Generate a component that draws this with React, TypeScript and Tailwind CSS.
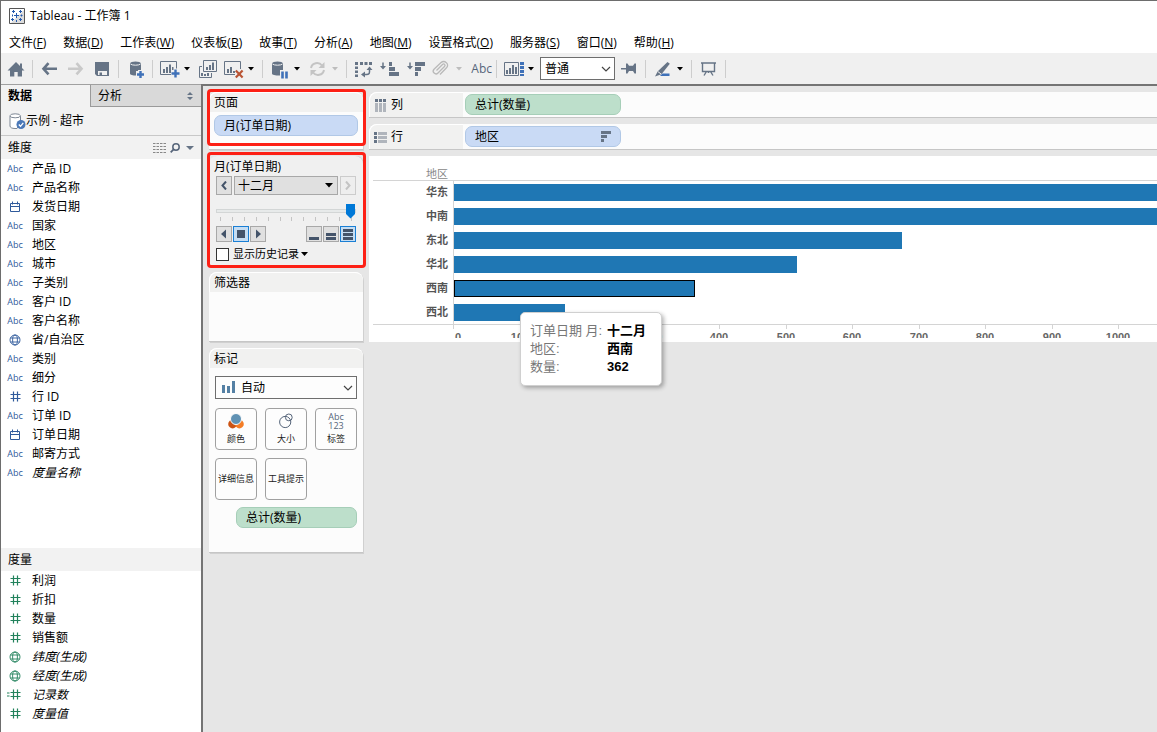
import { useState } from "react";
import type { ReactNode } from "react";

type FieldKind = "abc" | "date" | "geo" | "num" | "calc";

interface Field {
  name: string;
  kind: FieldKind;
  generated?: boolean;
}

const MENUS = [
  ["文件", "F"],
  ["数据", "D"],
  ["工作表", "W"],
  ["仪表板", "B"],
  ["故事", "T"],
  ["分析", "A"],
  ["地图", "M"],
  ["设置格式", "O"],
  ["服务器", "S"],
  ["窗口", "N"],
  ["帮助", "H"],
];

const DIMENSIONS: Field[] = [
  { name: "产品 ID", kind: "abc" },
  { name: "产品名称", kind: "abc" },
  { name: "发货日期", kind: "date" },
  { name: "国家", kind: "abc" },
  { name: "地区", kind: "abc" },
  { name: "城市", kind: "abc" },
  { name: "子类别", kind: "abc" },
  { name: "客户 ID", kind: "abc" },
  { name: "客户名称", kind: "abc" },
  { name: "省/自治区", kind: "geo" },
  { name: "类别", kind: "abc" },
  { name: "细分", kind: "abc" },
  { name: "行 ID", kind: "num" },
  { name: "订单 ID", kind: "abc" },
  { name: "订单日期", kind: "date" },
  { name: "邮寄方式", kind: "abc" },
  { name: "度量名称", kind: "abc", generated: true },
];

const MEASURES: Field[] = [
  { name: "利润", kind: "num" },
  { name: "折扣", kind: "num" },
  { name: "数量", kind: "num" },
  { name: "销售额", kind: "num" },
  { name: "纬度(生成)", kind: "geo", generated: true },
  { name: "经度(生成)", kind: "geo", generated: true },
  { name: "记录数", kind: "calc", generated: true },
  { name: "度量值", kind: "num", generated: true },
];

const REGIONS = [
  { name: "华东", value: 2180 },
  { name: "中南", value: 1960 },
  { name: "东北", value: 673 },
  { name: "华北", value: 516 },
  { name: "西南", value: 362 },
  { name: "西北", value: 167 },
];

const TICKS = [0, 100, 200, 300, 400, 500, 600, 700, 800, 900, 1000];
const PX_PER_UNIT = 0.665;

/* ---------- small shared pieces ---------- */

function Caret({ className = "text-black" }: { className?: string }) {
  return (
    <svg width="6" height="4" viewBox="0 0 6 4" className={`shrink-0 ${className}`}>
      <path d="M0 0H6L3 3.5Z" fill="currentColor" />
    </svg>
  );
}

function Chevron() {
  return (
    <svg width="10" height="6" viewBox="0 0 10 6" className="pointer-events-none absolute right-1 top-1/2 -translate-y-1/2">
      <path d="M1 1L5 5L9 1" fill="none" stroke="#444" strokeWidth="1.2" />
    </svg>
  );
}

function Sep({ className = "w-2" }: { className?: string }) {
  return (
    <span className={`flex justify-center shrink-0 ${className}`}>
      <span className="w-px h-[18px] bg-[#cdcdcd]" />
    </span>
  );
}

function Tool({ label, className = "w-7", children }: { label: string; className?: string; children: ReactNode }) {
  return (
    <button aria-label={label} className={`h-6 flex items-center justify-center shrink-0 text-[#667486] ${className}`}>
      <svg width="20" height="20" viewBox="0 0 20 20" fill="none" className="overflow-visible shrink-0">
        {children}
      </svg>
    </button>
  );
}

function CaretButton({ label, className }: { label: string; className?: string }) {
  return (
    <button aria-label={label} className="w-1.5 h-6 flex items-center shrink-0">
      <Caret className={className} />
    </button>
  );
}

function Toolbar() {
  return (
    <div className="h-[31px] bg-[#f0f0f0] flex items-center pl-[3px] overflow-hidden">
      <Tool label="主页" className="w-6">
        <path d="M10 3L1.5 11.5H4V17.5H8.3V13H11.7V17.5H16V11.5H18.5L16 9V4.5H14V7Z" fill="currentColor" />
      </Tool>
      <Sep />
      <Tool label="撤消" className="w-[26px]">
        <path d="M9.5 4.2L4.5 9.8L9.5 15.4M4.5 9.8H18" stroke="currentColor" strokeWidth="2.6" />
      </Tool>
      <Tool label="重做">
        <path d="M10.5 4.2L15.5 9.8L10.5 15.4M15.5 9.8H2" stroke="#c9c9c9" strokeWidth="2.6" />
      </Tool>
      <Tool label="保存" className="w-6">
        <path d="M3 3H17V17H5L3 15Z" fill="currentColor" />
        <path d="M6 12H15V16H10V13.5H7.5V16H6Z" fill="#f0f0f0" />
      </Tool>
      <Sep />
      <Tool label="新建数据源" className="w-[26px]">
        <path d="M5 4.5C5 1.8 16 1.8 16 4.5V11H13V12H11V16.5C8 16.5 5 16 5 14.5Z" fill="currentColor" />
        <path d="M5.5 5C7 6.6 14 6.6 15.5 5" stroke="#f0f0f0" />
        <path d="M15.5 12V19M12 15.5H19" stroke="#3f71b8" strokeWidth="2.4" />
      </Tool>
      <Sep />
      <Tool label="新建工作表">
        <path d="M11 15.5H.5V2.5H16.5V9.5" stroke="currentColor" />
        <path d="M3 10H5V14H3ZM6 8H8V14H6ZM9 5.5H11V14H9ZM12 8H13.5V11H12Z" fill="currentColor" />
        <path d="M15.5 10.5V18.5M11.5 14.5H19.5" stroke="#3f71b8" strokeWidth="2.4" />
      </Tool>
      <CaretButton label="新建选项" />
      <Tool label="复制工作表" className="w-8">
        <path d="M7.5 1.5H20.5V12.5H7.5Z" stroke="currentColor" />
        <path d="M10 8H12V11H10ZM13 6H15V11H13ZM16 3.5H18V11H16Z" fill="currentColor" />
        <path d="M6 7.5H3.5V18.5H15.5V14" stroke="currentColor" />
        <path d="M5 14H7V17H5ZM8 15H10V17H8ZM11 14H13V17H11Z" fill="currentColor" />
      </Tool>
      <Tool label="清除工作表" className="w-[26px]">
        <path d="M10 15.5H-.5V2.5H15.5V10" stroke="currentColor" />
        <path d="M2 10H4V14H2ZM5 8H7V14H5ZM8 12H10V14H8Z" fill="currentColor" />
        <path d="M10.8 11.5L17.6 18.5M17.6 11.5L10.8 18.5" stroke="#b95434" strokeWidth="2.2" />
      </Tool>
      <CaretButton label="清除选项" />
      <Sep className="w-4" />
      <Tool label="暂停自动更新" className="w-6">
        <path d="M0 4.5C0 1.8 11 1.8 11 4.5V11H8V16.5C3 16.5 0 16 0 14.5Z" fill="currentColor" />
        <path d="M.5 5C2 6.6 9 6.6 10.5 5" stroke="#f0f0f0" />
        <path d="M10.5 12.5V19.5M14.5 12.5V19.5" stroke="#3f71b8" strokeWidth="2.6" />
      </Tool>
      <CaretButton label="更新选项" />
      <Tool label="运行更新" className="w-8">
        <path d="M5 9C6 3.5 13 2.5 16 6.5M18 11C17 16.5 10 17.5 7 13.5" stroke="#c4c4c4" strokeWidth="2" />
        <path d="M18.5 3V9H12.5ZM4.5 17V11H10.5Z" fill="#c4c4c4" />
      </Tool>
      <CaretButton label="运行选项" className="text-[#bdbdbd]" />
      <Sep className="w-4" />
      <Tool label="交换行和列" className="w-5">
        <path d="M1 3H4V6H1ZM6 3H9V6H6ZM10.5 3H13.5V6H10.5ZM15 3H18V6H15ZM1 7.5H4V10H1ZM1 11.5H4V14H1ZM1 15.5H4V18H1Z" fill="currentColor" />
        <path d="M15.5 9V13C15.5 15.5 14 15.5 9 15.5" stroke="currentColor" strokeWidth="1.5" />
        <path d="M12.5 11L15.5 7.5L18.5 11ZM11 12.5L7 15.5L11 18.5Z" fill="currentColor" />
      </Tool>
      <Tool label="升序排序">
        <path d="M5 3.5V9" stroke="currentColor" strokeWidth="1.5" />
        <path d="M2 7H8L5 10.5ZM11 3H14V7H11ZM11 8H17V12H11ZM11 13H21V17H11Z" fill="currentColor" />
      </Tool>
      <Tool label="降序排序" className="w-[26px]">
        <path d="M5 3.5V9" stroke="currentColor" strokeWidth="1.5" />
        <path d="M2 7H8L5 10.5ZM10 3H20V7H10ZM10 8H16V12H10ZM10 13H13V17H10Z" fill="currentColor" />
      </Tool>
      <Tool label="组成员">
        <path d="M4.5 11.5L10.5 5.5C12 4 14 6 12.5 7.5L6 14C3.5 16.5-.5 13 2 10.2L8.8 3.8C12.5.5 18 5 14.5 8.8L8 15.5" stroke="#b9b9b9" strokeWidth="1.3" />
      </Tool>
      <CaretButton label="组选项" className="text-[#bdbdbd]" />
      <button className="w-[30px] h-6 flex items-center justify-end shrink-0 text-xs text-[#56657a]">Abc</button>
      <Sep />
      <Tool label="智能显示">
        <path d="M.5 3.5H14.5V16.5H.5Z" stroke="currentColor" />
        <path d="M2 11H4V15H2ZM5 9H7V15H5ZM8 6H10V15H8ZM11 8H13V15H11Z" fill="currentColor" />
        <path d="M16 3H20V6H16ZM16 7H20V10H16ZM16 11H20V14H16ZM16 15H20V17H16Z" fill="#3f71b8" />
      </Tool>
      <CaretButton label="智能显示选项" />
      <div className="relative w-[75px] h-[23px] ml-1.5 shrink-0">
        <select aria-label="适合" className="appearance-none w-full h-full bg-white border border-[#6e6e6e] pl-1 text-xs">
          <option>普通</option>
          <option>整个视图</option>
        </select>
        <Chevron />
      </div>
      <Tool label="固定轴" className="w-[26px]">
        <path d="M3 9H8V4.5H9.5L11 6.8H15L16.5 4.5H18V14.5H16.5L15 12H11L9.5 14.5H8V10.5H3Z" fill="currentColor" />
      </Tool>
      <Sep />
      <Tool label="突出显示">
        <path d="M14.5 3L16.8 4.8L8.5 15.2L2 17.5L4.8 12.2Z" fill="currentColor" />
        <path d="M4.5 12.3L8.6 15.4" stroke="#f0f0f0" />
        <path d="M9.5 14.5H16.5V17H7Z" fill="#3f71b8" />
      </Tool>
      <CaretButton label="突出显示选项" />
      <Sep className="w-4" />
      <Tool label="演示模式" className="w-[22px]">
        <path d="M1 4H16M2.5 4V12.5H14.5V4M6.5 12.5L4 16.5M10.5 12.5L13 16.5M8.5 12.5V14" stroke="currentColor" strokeWidth="1.4" />
      </Tool>
      <Sep />
    </div>
  );
}

/* ---------- data pane ---------- */

function FieldIcon({ kind }: { kind: FieldKind }) {
  if (kind === "abc") return <span className="text-[9px] font-medium leading-4">Abc</span>;
  if (kind === "date")
    return (
      <svg width="12" height="12" viewBox="0 0 12 12" fill="none" stroke="currentColor">
        <path d="M1.5 2.5H10.5V10.5H1.5ZM1.5 5.5H10.5M3.5 .5V3.5M8.5 .5V3.5" />
      </svg>
    );
  if (kind === "geo")
    return (
      <svg width="12" height="12" viewBox="0 0 12 12" fill="none" stroke="currentColor" strokeWidth=".9">
        <circle cx="6" cy="6" r="5" />
        <ellipse cx="6" cy="6" rx="2.4" ry="5" />
        <path d="M1.5 4H10.5M1.5 8H10.5" />
      </svg>
    );
  return (
    <svg width="16" height="11" viewBox="0 0 16 11" fill="none" stroke="currentColor" strokeWidth="1.2" className="shrink-0">
      <path d="M6.5 .5V10.5M10.5 .5V10.5M3.5 3.5H13.5M3.5 7.5H13.5" />
      {kind === "calc" && <path d="M-.5 4H2.5M-.5 7H2.5" />}
    </svg>
  );
}

function FieldList({ fields, className }: { fields: Field[]; className: string }) {
  return (
    <ul className={`bg-white ${className}`}>
      {fields.map((field) => (
        <li key={field.name} className="h-[19px] flex items-center gap-[9px] pl-1.5 whitespace-nowrap">
          <span className="w-4 flex justify-center shrink-0">
            <FieldIcon kind={field.kind} />
          </span>
          <span className={field.generated ? "text-black italic" : "text-black"}>{field.name}</span>
        </li>
      ))}
    </ul>
  );
}

function DataPane() {
  return (
    <aside className="w-[200px] shrink-0 flex flex-col bg-[#f2f2f2]">
      <div className="h-[23px] flex border-t border-[#a0a0a0]">
        <button className="w-[89px] text-left pl-[7px] font-bold">数据</button>
        <button className="flex-1 flex items-center justify-between pl-[7px] pr-2 bg-[#d9d9d9] border-l border-b border-[#9a9a9a]">
          分析
          <svg width="6" height="8" viewBox="0 0 6 8">
            <path d="M0 3L3 0L6 3ZM0 5H6L3 8Z" fill="#667486" />
          </svg>
        </button>
      </div>
      <button className="h-[29px] flex items-center pl-2 border-b border-[#c8c8c8]">
        <svg width="17" height="17" viewBox="0 0 17 17" fill="none">
          <path d="M1 3V13C1 14.5 3 15.5 6 15.5H8L11.5 9V3" fill="#fff" stroke="#7d8794" />
          <ellipse cx="6.2" cy="2.8" rx="5.2" ry="2" fill="#fff" stroke="#7d8794" />
          <circle cx="12" cy="11.5" r="4.5" fill="#4a78b8" />
          <path d="M9.8 11.5L11.5 13.3L14.3 9.8" stroke="#fff" strokeWidth="1.3" />
        </svg>
        示例 - 超市
      </button>
      <div className="h-[23px] flex items-center pl-[7px] pr-[7px]">
        <h2 className="flex-1">维度</h2>
        <button aria-label="查看数据">
          <svg width="13" height="10" viewBox="0 0 13 10" stroke="#888" strokeDasharray="2.5 1">
            <path d="M0 .5H13M0 3.5H13M0 6.5H13M0 9.5H13" />
          </svg>
        </button>
        <button aria-label="查找字段" className="ml-1">
          <svg width="10" height="10" viewBox="0 0 10 10" fill="none" stroke="#56657a">
            <circle cx="6" cy="4" r="3.2" strokeWidth="1.5" />
            <path d="M3.8 6.2L.7 9.3" strokeWidth="1.8" />
          </svg>
        </button>
        <button aria-label="维度选项" className="ml-1.5">
          <svg width="8" height="4" viewBox="0 0 8 4">
            <path d="M0 0H8L4 4Z" fill="#667486" />
          </svg>
        </button>
      </div>
      <FieldList fields={DIMENSIONS} className="flex-1 text-[#2f5a9b]" />
      <h2 className="h-[23px] flex items-center pl-[7px]">度量</h2>
      <FieldList fields={MEASURES} className="pb-[9px] text-[#22825c]" />
    </aside>
  );
}

/* ---------- cards ---------- */

function Card({ title, className = "", children }: { title: string; className?: string; children?: ReactNode }) {
  return (
    <section className={`relative rounded-t-lg bg-[#fcfcfc] border-b border-[#c6c6c6] shadow-[1px_1px_0_#d0d0d0] ${className}`}>
      <h2 className="h-5 flex items-center pl-1 rounded-t-lg bg-[#f1f1f0] border-t border-l border-white">{title}</h2>
      {children}
    </section>
  );
}

function Pill({ tone, className = "", children }: { tone: "blue" | "green"; className?: string; children: ReactNode }) {
  const color = tone === "blue" ? "bg-[#c9daf5] border-[#b1c8e6]" : "bg-[#bddfcb] border-[#a6ceb8]";
  return (
    <button className={`h-[21px] flex items-center justify-between pl-[9px] pr-[9px] border rounded-[7px] ${color} ${className}`}>
      {children}
    </button>
  );
}

function Highlight({ className }: { className: string }) {
  return <div className={`pointer-events-none absolute -left-0.5 -right-[3px] border-[3px] border-[#fd2015] rounded-[4px] ${className}`} />;
}

function PlayerButton({ label, active, children }: { label: string; active?: boolean; children: ReactNode }) {
  return (
    <button
      aria-label={label}
      className={`size-4 flex items-center justify-center border ${active ? "bg-[#c5ddf3] border-[#1a7fd4]" : "bg-[#e0e0e0] border-[#a8a8a8]"}`}
    >
      <svg width="12" height="12" viewBox="0 0 12 12" fill="#44546a">
        {children}
      </svg>
    </button>
  );
}

function PageControl() {
  const [month, setMonth] = useState(12);
  const [history, setHistory] = useState(false);

  return (
    <section className="relative h-[110px] px-[7px] rounded-t-lg bg-[#f0f0f0] shadow-[1px_0_0_#d0d0d0]">
      <h2 className="h-5 flex items-end -ml-0.5 leading-[18px]">月(订单日期)</h2>
      <div className="flex gap-0.5">
        <button aria-label="上一页" onClick={() => setMonth(Math.max(1, month - 1))} className="w-4 h-[19px] flex items-center justify-center bg-[#e0e0e0] border border-[#a8a8a8]">
          <svg width="6" height="9" viewBox="0 0 6 9">
            <path d="M5 .5L1.5 4.5L5 8.5" fill="none" stroke="#44546a" strokeWidth="2" />
          </svg>
        </button>
        <div className="relative flex-1">
          <select aria-label="月(订单日期)" className="appearance-none w-full h-[19px] bg-[#e0e0e0] border border-[#a8a8a8] pl-[3px] leading-4">
            <option>十二月</option>
          </select>
          <svg width="8" height="5" viewBox="0 0 8 5" className="pointer-events-none absolute right-[5px] top-[7px]">
            <path d="M0 0H8L4 4.5Z" />
          </svg>
        </div>
        <button aria-label="下一页" onClick={() => setMonth(Math.min(12, month + 1))} className="w-4 h-[19px] flex items-center justify-center bg-[#eeeeee] border border-[#cccccc]">
          <svg width="6" height="9" viewBox="0 0 6 9">
            <path d="M1 .5L4.5 4.5L1 8.5" fill="none" stroke="#c4c4c4" strokeWidth="2" />
          </svg>
        </button>
      </div>
      <input
        type="range"
        aria-label="月份"
        min={1}
        max={12}
        value={month}
        onChange={(e) => setMonth(Number(e.target.value))}
        className="block w-full h-[15px] mt-2 appearance-none bg-transparent [&::-webkit-slider-runnable-track]:h-1 [&::-webkit-slider-runnable-track]:bg-[#e7eaea] [&::-webkit-slider-runnable-track]:border [&::-webkit-slider-runnable-track]:border-[#d3d6d6] [&::-webkit-slider-thumb]:appearance-none [&::-webkit-slider-thumb]:w-[9px] [&::-webkit-slider-thumb]:h-[15px] [&::-webkit-slider-thumb]:-mt-1.5 [&::-webkit-slider-thumb]:bg-[#0078d7] [&::-webkit-slider-thumb]:[clip-path:polygon(0_0,100%_0,100%_70%,50%_100%,0_70%)]"
      />
      <div className="flex justify-between px-1 -mt-px">
        {Array.from({ length: 12 }, (_, i) => (
          <span key={i} className="w-px h-1 bg-[#c4c4c4]" />
        ))}
      </div>
      <div className="flex justify-between mt-[5px]">
        <div className="flex gap-px">
          <PlayerButton label="向后播放">
            <path d="M8 1.5V10.5L3 6Z" />
          </PlayerButton>
          <PlayerButton label="停止" active>
            <path d="M2 2H10V10H2Z" />
          </PlayerButton>
          <PlayerButton label="向前播放">
            <path d="M4 1.5V10.5L9 6Z" />
          </PlayerButton>
        </div>
        <div className="flex gap-px">
          <PlayerButton label="慢速">
            <path d="M1 9H11V12H1Z" />
          </PlayerButton>
          <PlayerButton label="中速">
            <path d="M1 5H11V8H1ZM1 9H11V12H1Z" />
          </PlayerButton>
          <PlayerButton label="快速" active>
            <path d="M1 1H11V4H1ZM1 5H11V8H1ZM1 9H11V12H1Z" />
          </PlayerButton>
        </div>
      </div>
      <div className="flex items-center h-6 text-[11px]">
        <label className="flex items-center gap-1">
          <input type="checkbox" checked={history} onChange={(e) => setHistory(e.target.checked)} className="appearance-none size-[13px] bg-white border border-[#333] checked:bg-[#0078d7]" />
          显示历史记录
        </label>
        <button aria-label="历史记录选项" className="ml-0.5">
          <svg width="7" height="4" viewBox="0 0 7 4">
            <path d="M0 0H7L3.5 4Z" />
          </svg>
        </button>
      </div>
      <Highlight className="-top-1 -bottom-0.5" />
    </section>
  );
}

function MarkButton({ label, children }: { label: string; children?: ReactNode }) {
  return (
    <button className="h-[42px] flex flex-col items-center justify-center gap-0.5 bg-[#fdfdfd] border border-[#a0a0a0] rounded-[4px] text-[9px] text-[#222] whitespace-nowrap">
      {children}
      <span className="leading-[14px]">{label}</span>
    </button>
  );
}

function MarksCard() {
  return (
    <Card title="标记" className="h-[205px]">
      <div className="px-[6px] pt-2">
        <div className="relative h-[23px]">
          <select aria-label="标记类型" className="appearance-none w-full h-full pl-[25px] bg-[#fdfdfd] border border-[#6e6e6e]">
            <option>自动</option>
          </select>
          <svg width="14" height="12" viewBox="0 0 14 12" fill="#5480a4" className="pointer-events-none absolute left-[6px] top-[5px]">
            <path d="M1 4H4V12H1ZM6 5H9V12H6ZM11 0H14V12H11Z" />
          </svg>
          <Chevron />
        </div>
        <div className="grid grid-cols-3 gap-2 mt-[9px]">
          <MarkButton label="颜色">
            <svg width="16" height="17" viewBox="0 0 16 17">
              <circle cx="4.6" cy="11" r="4.4" fill="#cc5314" />
              <circle cx="11.4" cy="11" r="4.4" fill="#f47d26" />
              <circle cx="8" cy="6" r="5.5" fill="#6092b4" stroke="#fdfdfd" />
            </svg>
          </MarkButton>
          <MarkButton label="大小">
            <svg width="14" height="17" viewBox="0 0 14 17" fill="none" stroke="#56657a">
              <circle cx="6.2" cy="9" r="5.6" />
              <circle cx="9.8" cy="4.4" r="3.4" />
            </svg>
          </MarkButton>
          <MarkButton label="标签">
            <span className="flex flex-col items-center leading-[9px] text-[#56657a]">
              <span>Abc</span>
              <span>123</span>
            </span>
          </MarkButton>
          <MarkButton label="详细信息" />
          <MarkButton label="工具提示" />
        </div>
        <Pill tone="green" className="w-[121px] ml-auto mt-[7px]">
          总计(数量)
        </Pill>
      </div>
    </Card>
  );
}

/* ---------- shelves and chart ---------- */

function Shelf({ title, icon, children }: { title: string; icon: ReactNode; children: ReactNode }) {
  return (
    <div className="h-[26px] flex items-stretch bg-[#fcfcfc] border-b border-[#c6c6c6] rounded-tl-lg">
      <h2 className="w-[94px] flex items-center gap-1 pl-1 bg-[#f1f1f0] border-t border-l border-white rounded-tl-lg">
        <svg width="13" height="13" viewBox="0 0 13 13">
          {icon}
        </svg>
        {title}
      </h2>
      <div className="flex items-center pl-0.5">{children}</div>
    </div>
  );
}

function Chart() {
  return (
    <div className="relative">
      <div className="h-[186px] bg-white pl-1 overflow-hidden text-[11px]">
        <div className="h-[25px] flex items-end border-b border-[#d4d4d4] text-[#888]">
          <span className="w-[75px] text-right leading-3">地区</span>
        </div>
        {REGIONS.map((region) => (
          <div key={region.name} className="h-6 flex">
            <span className="w-20 pr-[5px] text-right font-bold leading-[22px] text-[#555] shrink-0">{region.name}</span>
            <div className="flex-1 min-w-0 flex items-start pt-[3px] border-l border-[#d4d4d4] overflow-hidden">
              <div
                className={region.name === "西南" ? "h-[17px] bg-[#1f77b4] outline outline-black -outline-offset-1 shrink-0" : "h-[17px] bg-[#1f77b4] shrink-0"}
                style={{ width: Math.round(region.value * PX_PER_UNIT) }}
              />
            </div>
          </div>
        ))}
        {/* value axis */}
        <div className="-mt-px h-[14px] border-t border-[#d4d4d4] overflow-hidden">
          <div className="relative ml-20 h-full">
            {TICKS.map((tick) => (
              <div key={tick} className="absolute top-0" style={{ left: Math.round(tick * PX_PER_UNIT) }}>
                <div className="w-px h-1 bg-[#d4d4d4]" />
                <span className={`absolute top-1.5 font-bold leading-3 text-[#666] font-["Liberation_Sans",sans-serif] ${tick === 0 ? "left-0.5" : "-translate-x-1/2"}`}>
                  {tick}
                </span>
              </div>
            ))}
          </div>
        </div>
      </div>

      {/* mark tooltip */}
      <dl className='absolute left-[151px] top-[156px] w-[142px] grid grid-cols-[77px_auto] px-[9px] py-[9px] bg-white border border-[#d0d0d0] rounded-[5px] shadow-[2px_2px_4px_rgba(0,0,0,0.3)] text-[13px] leading-[18px] whitespace-nowrap font-["Liberation_Sans","Noto_Sans_CJK_SC",sans-serif]'>
        <dt className="text-[#777]">订单日期 月:</dt>
        <dd className="font-bold">十二月</dd>
        <dt className="text-[#777]">地区:</dt>
        <dd className="font-bold">西南</dd>
        <dt className="text-[#777]">数量:</dt>
        <dd className="font-bold">362</dd>
      </dl>
    </div>
  );
}

export default function App() {
  return (
    <div className='min-h-screen flex flex-col bg-white border-t border-l border-[#6d6d6d] text-xs text-black font-["Open_Sans","Noto_Sans_CJK_SC",sans-serif]'>
      <header className="h-[30px] flex items-center gap-[5px] pl-2">
        <svg width="16" height="16" viewBox="0 0 16 16">
          <path d="M.5 .5H15.5V15.5H.5Z" fill="#fff" stroke="#555" />
          <path d="M15 2V15H2Z" fill="#dcdcdc" />
          <path
            d="M7.5 5V10M5 7.5H10M4.5 2V5M3 3.5H6M11.5 2V5M10 3.5H13M3.5 10V13M2 11.5H5M11.5 10V13M10 11.5H13M7.5 12V14M3.5 6.5V8.5M12.5 6.5V8.5M11.5 7.5H13.5"
            fill="none"
            stroke="#2459ad"
          />
        </svg>
        <h1>Tableau - 工作簿 1</h1>
      </header>
      <nav className="h-[22px] flex items-end gap-[17px] pl-2 leading-5 whitespace-nowrap">
        {MENUS.map(([label, key]) => (
          <button key={key}>
            {label}(<span className="underline">{key}</span>)
          </button>
        ))}
      </nav>
      <Toolbar />

      <div className="flex-1 flex">
        <DataPane />
        <main className="flex-1 min-w-0 flex items-start gap-1.5 pl-1.5 pt-1.5 bg-[#e6e6e6] border-t-2 border-l-2 border-[#747474]">
          <div className="w-[154px] shrink-0 flex flex-col gap-1.5">
            <Card title="页面" className="h-[58px]">
              <div className="px-[5px] pt-[3px]">
                <Pill tone="blue" className="w-full">
                  月(订单日期)
                </Pill>
              </div>
              <Highlight className="-top-[3px] bottom-[3px]" />
            </Card>
            <PageControl />
            <Card title="筛选器" className="h-[70px]" />
            <MarksCard />
          </div>

          <div className="flex-1 min-w-0 flex flex-col gap-1.5">
            <Shelf
              title="列"
              icon={
                <>
                  <path d="M1 0H4V3H1ZM5 0H8V3H5ZM9 0H12V3H9Z" fill="#667486" />
                  <path d="M1 4H4V13H1ZM5 4H8V13H5ZM9 4H12V13H9Z" fill="#b0b5bc" />
                </>
              }
            >
              <Pill tone="green" className="w-[156px]">
                总计(数量)
              </Pill>
            </Shelf>
            <Shelf
              title="行"
              icon={
                <>
                  <path d="M0 1H3V4H0ZM0 5H3V8H0ZM0 9H3V12H0Z" fill="#667486" />
                  <path d="M4 1H13V4H4ZM4 5H13V8H4ZM4 9H13V12H4Z" fill="#b0b5bc" />
                </>
              }
            >
              <Pill tone="blue" className="w-[156px]">
                地区
                <svg width="10" height="11" viewBox="0 0 10 11">
                  <path d="M0 0H10V3H0ZM0 4H6V7H0ZM0 8H3V11H0Z" fill="#667486" />
                </svg>
              </Pill>
            </Shelf>
            <Chart />
          </div>
        </main>
      </div>
    </div>
  );
}
